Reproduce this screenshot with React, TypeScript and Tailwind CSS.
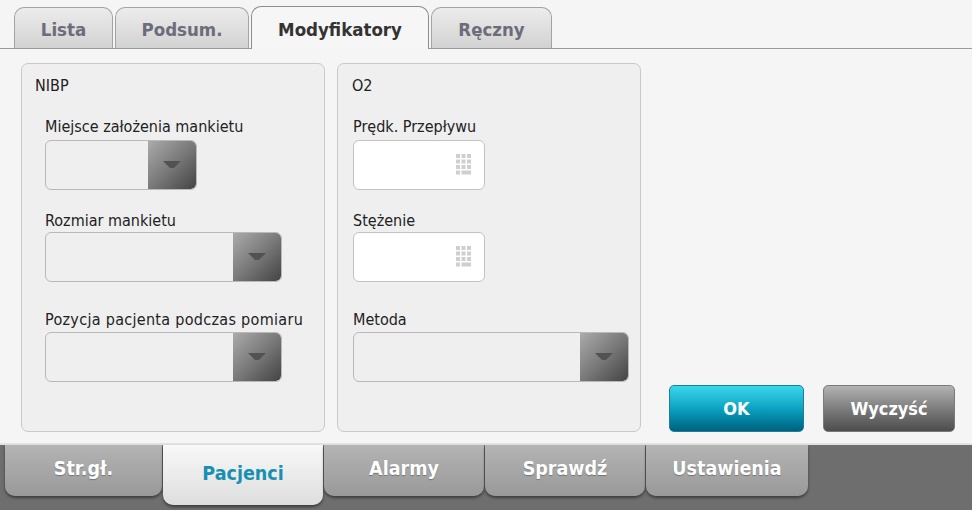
import React from 'react';

const font = { fontFamily: '"DejaVu Sans Condensed", "DejaVu Sans", sans-serif' };

function TopTab({ label, active, width }: { label: string; active?: boolean; width: string }) {
  if (active) {
    return (
      <div
        className={`${width} h-[43px] -mb-px flex items-center justify-center pt-[5px] rounded-t-[10px] border border-b-0 border-[#8c8c8c] bg-[#f6f6f6] text-[18.5px] font-bold text-[#333]`}
      >
        {label}
      </div>
    );
  }
  return (
    <div
      className={`${width} h-[41px] flex items-center justify-center pt-[5px] rounded-t-[10px] border border-b-0 border-[#a3a3a3] bg-gradient-to-b from-[#ececec] to-[#d2d2d2] text-[18.5px] font-bold text-[#6c6c7a]`}
    >
      {label}
    </div>
  );
}

function Dropdown({ width }: { width: string }) {
  return (
    <div className={`${width} h-[50px] flex rounded-[6px] border border-[#b9b9b9] bg-[#efefef] overflow-hidden`}>
      <div className="flex-1" />
      <div className="w-[48px] h-full flex items-center justify-center bg-gradient-to-br from-[#ababab] via-[#7a7a7a] to-[#444] rounded-r-[5px]">
        <svg width="20" height="9" viewBox="0 0 20 9">
          <path d="M1 1 H19 L12 8 H8 Z" fill="#525252" />
        </svg>
      </div>
    </div>
  );
}

function NumInput() {
  return (
    <div className="w-[132px] h-[50px] flex items-center justify-end pr-[12px] rounded-[6px] border border-[#c3c3c3] bg-white">
      <svg width="16" height="21" viewBox="0 0 16 21">
        {[0, 1, 2].map((r) =>
          [0, 1, 2].map((c) => (
            <rect key={`${r}-${c}`} x={c * 5.5} y={r * 5.5} width="4" height="4" fill="#cfcfcf" />
          ))
        )}
        <rect x="0" y="16.5" width="4" height="4" fill="#cfcfcf" />
        <rect x="5.5" y="16.5" width="9.5" height="4" fill="#cfcfcf" />
      </svg>
    </div>
  );
}

function BottomTab({ label, active, width }: { label: string; active?: boolean; width: string }) {
  if (active) {
    return (
      <div
        className={`${width} h-[60px] flex items-center justify-center pb-[2px] rounded-b-[10px] bg-gradient-to-b from-[#f8f8f8] to-[#dedede] shadow-[0_2px_3px_rgba(0,0,0,0.45)] text-[19.5px] font-bold text-[#1790b1]`}
      >
        {label}
      </div>
    );
  }
  return (
    <div
      className={`${width} h-[51px] flex items-center justify-center pb-[2px] rounded-b-[10px] bg-gradient-to-b from-[#b4b4b4] to-[#999] shadow-[0_2px_3px_rgba(0,0,0,0.45)] text-[19.5px] font-bold text-white [text-shadow:0_1px_1px_rgba(0,0,0,0.3)]`}
    >
      {label}
    </div>
  );
}

export default function App() {
  return (
    <div className="w-[972px] h-[510px] flex flex-col bg-[#f5f5f5] overflow-hidden" style={font}>
      {/* top tabs */}
      <div className="h-[49px] flex items-end gap-[2px] pl-[14px] border-b border-[#9a9a9a]">
        <TopTab label="Lista" width="w-[99px]" />
        <TopTab label="Podsum." width="w-[134px]" />
        <TopTab label="Modyfikatory" active width="w-[178px]" />
        <TopTab label="Ręczny" width="w-[121px]" />
      </div>

      {/* content */}
      <div className="flex-1 flex pt-[14px] pl-[21px] pb-[11px] border-b-2 border-[#e2e2e2]">
        <div className="w-[304px] h-[369px] flex flex-col rounded-[7px] border border-[#c9c9c9] bg-[#efefef] pl-[13px] text-[16px] text-[#222]">
          <div className="mt-[11px] h-[22px] leading-[22px]">NIBP</div>
          <div className="pl-[10px] flex flex-col">
            <div className="mt-[19px] h-[22px] leading-[22px]">Miejsce założenia mankietu</div>
            <div className="mt-[2px]">
              <Dropdown width="w-[152px]" />
            </div>
            <div className="mt-[20px] h-[22px] leading-[22px]">Rozmiar mankietu</div>
            <div>
              <Dropdown width="w-[237px]" />
            </div>
            <div className="mt-[27px] h-[22px] leading-[22px] whitespace-nowrap tracking-[0.3px]">
              Pozycja pacjenta podczas pomiaru
            </div>
            <div className="mt-[1px]">
              <Dropdown width="w-[237px]" />
            </div>
          </div>
        </div>

        <div className="ml-[12px] w-[304px] h-[369px] flex flex-col rounded-[7px] border border-[#c9c9c9] bg-[#efefef] pl-[14px] text-[16px] text-[#222]">
          <div className="mt-[11px] h-[22px] leading-[22px]">O2</div>
          <div className="pl-[1px] flex flex-col">
            <div className="mt-[19px] h-[22px] leading-[22px]">Prędk. Przepływu</div>
            <div className="mt-[2px]">
              <NumInput />
            </div>
            <div className="mt-[20px] h-[22px] leading-[22px]">Stężenie</div>
            <div>
              <NumInput />
            </div>
            <div className="mt-[27px] h-[22px] leading-[22px]">Metoda</div>
            <div className="mt-[1px]">
              <Dropdown width="w-[276px]" />
            </div>
          </div>
        </div>

        <div className="flex-1 flex items-end justify-end gap-[19px] pr-[17px]">
          <button className="w-[135px] h-[47px] rounded-[5px] border border-[#1b7f98] bg-gradient-to-b from-[#38d6ec] via-[#0aa3c2] to-[#00617f] text-[18px] font-bold text-white">
            OK
          </button>
          <button className="w-[132px] h-[47px] rounded-[5px] border border-[#7a7a7a] bg-gradient-to-b from-[#b3b3b3] via-[#7d7d7d] to-[#4d4d4d] text-[18px] font-bold text-white">
            Wyczyść
          </button>
        </div>
      </div>

      {/* bottom nav */}
      <div className="h-[66px] flex items-start gap-[1px] pl-[5px] bg-[#6e6e6e]">
        <BottomTab label="Str.gł." width="w-[157px]" />
        <BottomTab label="Pacjenci" active width="w-[160px]" />
        <BottomTab label="Alarmy" width="w-[160px]" />
        <BottomTab label="Sprawdź" width="w-[160px]" />
        <BottomTab label="Ustawienia" width="w-[162px]" />
      </div>
    </div>
  );
}
